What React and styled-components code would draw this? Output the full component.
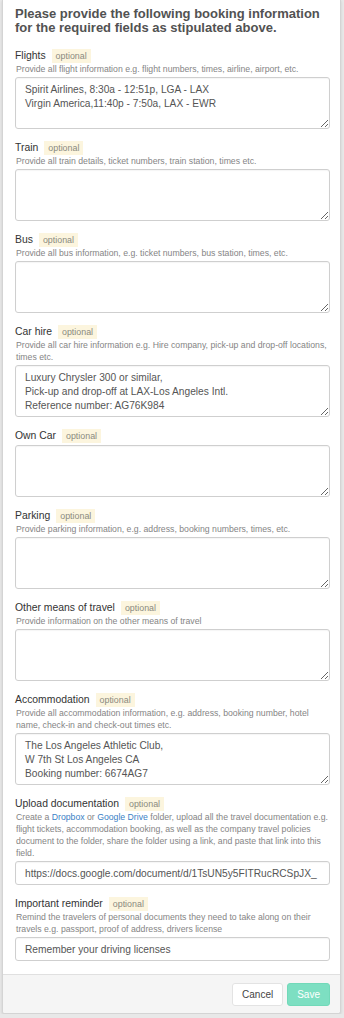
import React from 'react';
import styled, { createGlobalStyle } from 'styled-components';

const GlobalStyle = createGlobalStyle`
  body {
    margin: 0;
    background: #e8e8e8;
    font-family: "Liberation Sans", Arial, sans-serif;
  }
`;

const Card = styled.div`
  margin-left: 2px;
  width: 339px;
  box-sizing: border-box;
  background: #fff;
  border: 1px solid #d4d4d4;
  border-top: none;
  border-radius: 0 0 3px 3px;
  box-shadow: 0 1px 3px rgba(0, 0, 0, 0.12);
  overflow: hidden;
`;

const Body = styled.div`
  padding: 7px 10px 13px 12px;
`;

const Title = styled.h2`
  margin: 0 0 14px;
  font-size: 13px;
  line-height: 14px;
  font-weight: bold;
  color: #525252;
`;

const Field = styled.div`
  margin-bottom: 12px;
  &:last-child {
    margin-bottom: 0;
  }
`;

const LabelRow = styled.div`
  display: flex;
  align-items: center;
  height: 14px;
`;

const Label = styled.label`
  font-size: 10.4px;
  line-height: 14px;
  color: #333;
`;

const Badge = styled.span`
  margin-left: 6px;
  padding: 0 4px;
  height: 14px;
  line-height: 14px;
  font-size: 8.9px;
  color: #8a8a7e;
  background: #fcf5de;
`;

const Hint = styled.div`
  font-size: 8.7px;
  line-height: 12px;
  color: #858585;
  padding-left: 1px;
`;

const Link = styled.a`
  color: #3a7fc6;
  text-decoration: none;
`;

const boxBase = `
  display: block;
  width: 100%;
  box-sizing: border-box;
  margin-top: 2px;
  border: 1px solid #cfcfcf;
  border-radius: 3px;
  background: #fff;
  font-family: "Liberation Sans", Arial, sans-serif;
  font-size: 10.2px;
  line-height: 14px;
  color: #555;
  box-shadow: inset 0 1px 1px rgba(0, 0, 0, 0.04);
  outline: none;
`;

const TextArea = styled.textarea`
  ${boxBase}
  height: 52px;
  padding: 5px 9px;
  resize: vertical;
  overflow: hidden;
`;

const Input = styled.input`
  ${boxBase}
  height: 24px;
  padding: 0 9px;
`;

const Footer = styled.div`
  display: flex;
  justify-content: flex-end;
  gap: 4px;
  padding: 8px 10px 7px;
  background: #f5f5f5;
  border-top: 1px solid #e0e0e0;
`;

const Button = styled.button`
  height: 23px;
  padding: 0 9px;
  border-radius: 3px;
  font-family: "Liberation Sans", Arial, sans-serif;
  font-size: 10px;
  border: 1px solid ${(p) => (p.$primary ? '#72d9b9' : '#e3e3e3')};
  background: ${(p) => (p.$primary ? '#7ddfc2' : '#fff')};
  color: ${(p) => (p.$primary ? '#fff' : '#444')};
`;

const fields = [
  {
    label: 'Flights',
    hint: 'Provide all flight information e.g. flight numbers, times, airline, airport, etc.',
    value: 'Spirit Airlines, 8:30a - 12:51p, LGA - LAX\nVirgin America,11:40p - 7:50a, LAX - EWR',
  },
  {
    label: 'Train',
    hint: 'Provide all train details, ticket numbers, train station, times etc.',
  },
  {
    label: 'Bus',
    hint: 'Provide all bus information, e.g. ticket numbers, bus station, times, etc.',
  },
  {
    label: 'Car hire',
    hint: 'Provide all car hire information e.g. Hire company, pick-up and drop-off locations, times etc.',
    value:
      'Luxury Chrysler 300 or similar,\nPick-up and drop-off at LAX-Los Angeles Intl.\nReference number: AG76K984',
  },
  { label: 'Own Car' },
  {
    label: 'Parking',
    hint: 'Provide parking information, e.g. address, booking numbers, times, etc.',
  },
  {
    label: 'Other means of travel',
    hint: 'Provide information on the other means of travel',
  },
  {
    label: 'Accommodation',
    hint: 'Provide all accommodation information, e.g. address, booking number, hotel name, check-in and check-out times etc.',
    value: 'The Los Angeles Athletic Club,\nW 7th St Los Angeles CA\nBooking number: 6674AG7',
  },
  {
    label: 'Upload documentation',
    hint: (
      <>
        Create a <Link href="#">Dropbox</Link> or <Link href="#">Google Drive</Link> folder,
        upload all the travel documentation e.g. flight tickets, accommodation booking, as well
        as the company travel policies document to the folder, share the folder using a link,
        and paste that link into this field.
      </>
    ),
    value: 'https://docs.google.com/document/d/1TsUN5y5FITRucRCSpJX_',
    single: true,
  },
  {
    label: 'Important reminder',
    hint: 'Remind the travelers of personal documents they need to take along on their travels e.g. passport, proof of address, drivers license',
    value: 'Remember your driving licenses',
    single: true,
  },
];

const App = () => {
  return (
    <>
      <GlobalStyle />
      <Card>
        <Body>
          <Title>
            Please provide the following booking information for the required fields as
            stipulated above.
          </Title>
          {fields.map((f) => (
            <Field key={f.label}>
              <LabelRow>
                <Label>{f.label}</Label>
                <Badge>optional</Badge>
              </LabelRow>
              {f.hint && <Hint>{f.hint}</Hint>}
              {f.single ? (
                <Input defaultValue={f.value} />
              ) : (
                <TextArea defaultValue={f.value || ''} />
              )}
            </Field>
          ))}
        </Body>
        <Footer>
          <Button>Cancel</Button>
          <Button $primary>Save</Button>
        </Footer>
      </Card>
    </>
  );
};

export default App;
